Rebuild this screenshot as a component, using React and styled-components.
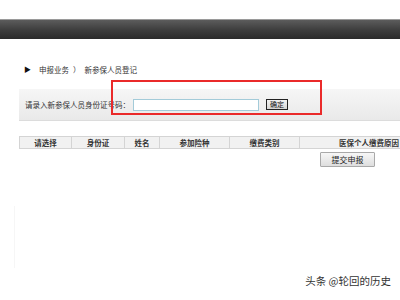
import React from 'react';
import styled, { createGlobalStyle } from 'styled-components';

const GlobalStyle = createGlobalStyle`
    html, body {
        margin: 0;
        padding: 0;
        background: #fff;
        overflow: hidden;
    }
    body {
        font-family: "Noto Sans CJK SC", "Noto Sans", sans-serif;
        color: #333;
    }
`

const Page = styled.div`
    position: relative;
    width: 400px;
    height: 300px;
    overflow: hidden;
    padding-top: 19px;
    box-sizing: border-box;
`

const TopBar = styled.div`
    height: 19px;
    border-top: 1px solid #9a9a9a;
    background: linear-gradient(#5c5c5c, #3c3c3c 55%, #2a2a2a);
`

const Breadcrumb = styled.div`
    display: flex;
    align-items: center;
    height: 12px;
    margin-top: 24px;
    padding-left: 24px;
    font-size: 7.5px;
    color: #333;
`

const Arrow = styled.span`
    font-size: 7px;
    color: #111;
    width: 15px;
`

const Sep = styled.span`
    margin: 0 4px;
`

const FormBand = styled.div`
    display: flex;
    align-items: center;
    height: 31px;
    margin: 14px 0 0 19px;
    padding-left: 6px;
    background: linear-gradient(#f6f6f6, #e9e9e9);
    border-bottom: 1px solid #dcdcdc;
    font-size: 7.5px;
    color: #333;
`

const Label = styled.span`
    width: 108px;
`

const IdInput = styled.input`
    width: 126px;
    height: 12px;
    padding: 0;
    margin: 0;
    border: 1px solid #a3cbd9;
    background: #fff;
    box-sizing: border-box;
    outline: none;
`

const OkButton = styled.button`
    margin-left: 7px;
    width: 22px;
    height: 11px;
    padding: 0;
    border: 1px solid #222;
    background: linear-gradient(#f2f2f2, #d6d6d6);
    font-family: inherit;
    font-size: 7px;
    line-height: 9px;
    color: #111;
`

const Highlight = styled.div`
    position: absolute;
    left: 111px;
    top: 80px;
    width: 211px;
    height: 35px;
    border: 2px solid #ea2a2a;
    box-sizing: border-box;
`

const Table = styled.div`
    display: flex;
    margin: 15px 0 0 19px;
    width: 420px;
    height: 13px;
    background: #f1f1f1;
    border: 1px solid #d4d4d4;
    border-right: none;
    box-sizing: border-box;
`

const HeadCell = styled.div`
    width: ${p => p.$w}px;
    flex: ${p => (p.$grow ? 1 : 'none')};
    border-right: 1px solid #d4d4d4;
    display: flex;
    align-items: center;
    justify-content: center;
    font-size: 7.5px;
    font-weight: bold;
    color: #333;
`

const Actions = styled.div`
    display: flex;
    padding: 3px 0 0 320px;
`

const SubmitButton = styled.button`
    width: 55px;
    height: 15px;
    padding: 0;
    border: 1px solid #a9a9a9;
    border-radius: 1px;
    background: linear-gradient(#f7f7f7, #dedede);
    font-family: inherit;
    font-size: 8px;
    color: #222;
`

const EdgeLine = styled.div`
    position: absolute;
    left: 14px;
    top: 206px;
    width: 1px;
    height: 62px;
    background: #f6f6f6;
`

const Watermark = styled.div`
    position: absolute;
    right: 9px;
    bottom: 12px;
    font-size: 10.5px;
    color: #333;
    text-shadow: 0 0 2px #fff;
`

const columns = [
    { title: '请选择', w: 51 },
    { title: '身份证', w: 52 },
    { title: '姓名', w: 34 },
    { title: '参加险种', w: 69 },
    { title: '缴费类别', w: 69 },
    { title: '医保个人缴费原因', grow: true },
]

function App() {
    return (
        <Page>
            <GlobalStyle />
            <TopBar />

            <Breadcrumb>
                <Arrow>▶</Arrow>
                <span>申报业务</span>
                <Sep>）</Sep>
                <span>新参保人员登记</span>
            </Breadcrumb>

            <FormBand>
                <Label>请录入新参保人员身份证号码：</Label>
                <IdInput type="text" />
                <OkButton>确定</OkButton>
            </FormBand>

            <Table>
                {columns.map(c => (
                    <HeadCell key={c.title} $w={c.w} $grow={c.grow}>{c.title}</HeadCell>
                ))}
            </Table>

            <Actions>
                <SubmitButton>提交申报</SubmitButton>
            </Actions>

            <Highlight />
            <EdgeLine />
            <Watermark>头条 @轮回的历史</Watermark>
        </Page>
    )
}

export default App
